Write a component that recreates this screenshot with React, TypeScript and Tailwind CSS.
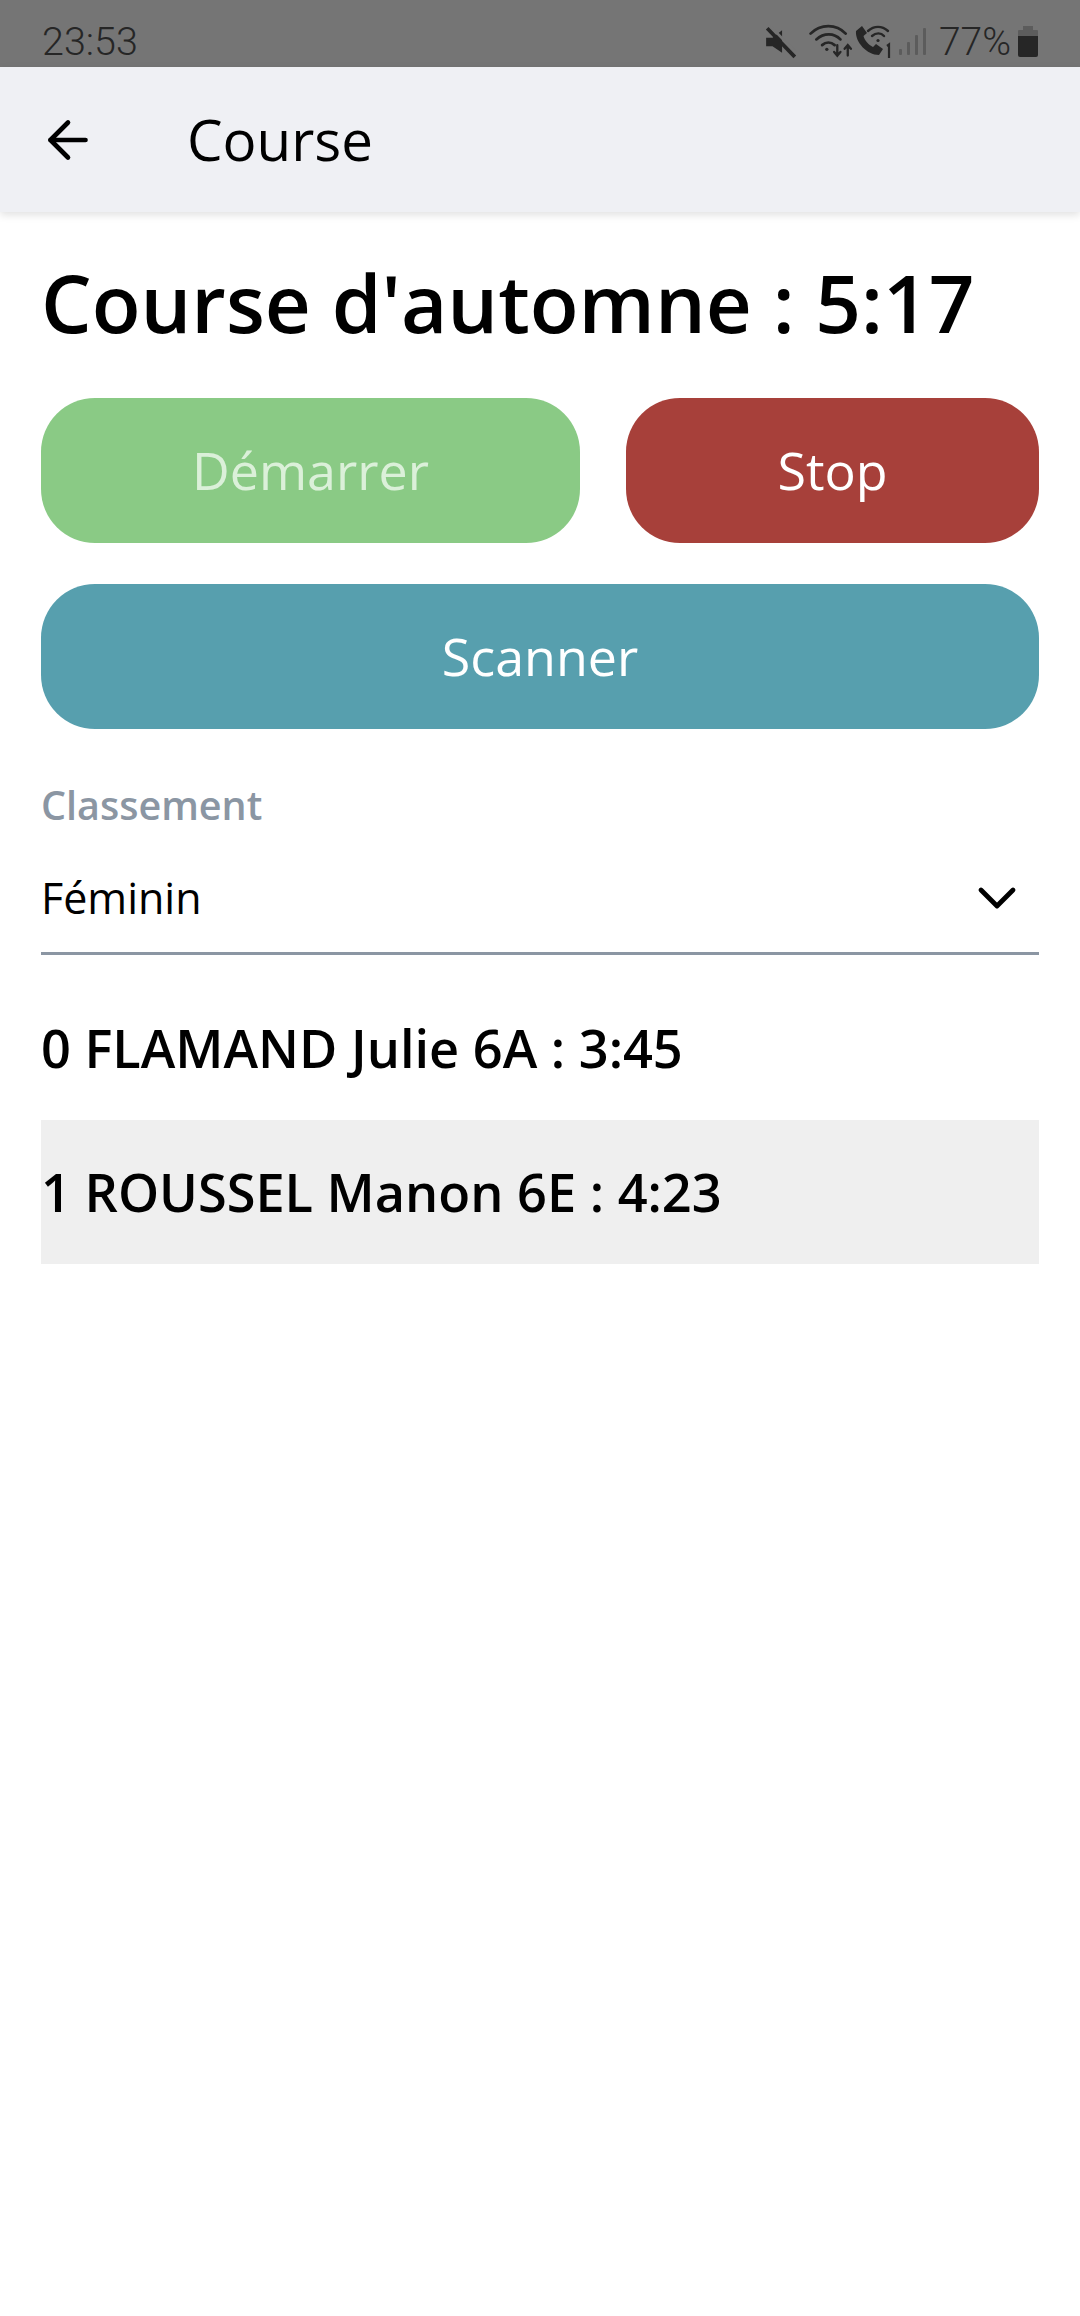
import { ArrowLeft, ChevronDown } from "lucide-react";

function StatusIcons() {
  return (
    <div className="flex items-center text-[#262626] mt-[16px]">
      <svg width="32" height="34" viewBox="0 0 30 32" className="mr-[12px]">
        <path d="M1 12h6l9-7v21l-9-6H1z" fill="#262626" />
        <path d="M2 3l26 27" stroke="#262626" strokeWidth="3.5" />
        <path d="M5 1l26 27" stroke="#757575" strokeWidth="2.5" />
      </svg>
      <svg width="44" height="36" viewBox="0 0 42 34" fill="none" stroke="#262626" strokeWidth="2.6" strokeLinecap="round">
        <path d="M1.5 9C11 -0.5 26 -0.5 35 9" />
        <path d="M7 14.5c7-6.5 17-6.5 23 0" />
        <path d="M12.5 20c3.6-3.2 8.4-3.2 12 0" />
        <circle cx="17" cy="24" r="1.6" fill="#262626" stroke="none" />
        <path d="M27 20v10m-3-3.5l3 3.5 3-3.5M37 30V20m-3 3.5l3-3.5 3 3.5" strokeWidth="2.2" />
      </svg>
      <svg width="38" height="34" viewBox="0 0 38 34" fill="none" className="ml-[1px]">
        <path d="M2 6l6-5 5 7-3.5 3c1 4 5 9 9.5 11l3-3 7 5-4 6C13 30 1 17 2 6z" fill="#262626" />
        <path d="M14 6c6-5.5 14-5.5 20 0M18 11c4-3.5 9-3.5 12 0" stroke="#262626" strokeWidth="2.4" strokeLinecap="round" />
        <circle cx="24" cy="15.5" r="1.6" fill="#262626" />
        <path d="M33 21l2-1.5V33" stroke="#262626" strokeWidth="2.2" />
      </svg>
      <svg width="30" height="32" viewBox="0 0 30 32" className="ml-[5px]" fill="#5c5c5c">
        <rect x="2" y="23" width="3" height="6" rx="1" />
        <rect x="10" y="16" width="3" height="13" rx="1" />
        <rect x="18" y="9" width="3" height="20" rx="1" />
        <rect x="26" y="2" width="3" height="27" rx="1" />
      </svg>
      <span className="ml-[12px] text-[39px] leading-[40px] [font-family:Roboto,sans-serif] font-light">77%</span>
      <svg width="22" height="32" viewBox="0 0 22 32" className="ml-[6px]">
        <rect x="6" y="0" width="10" height="5" fill="#5c5c5c" />
        <path d="M2 4h18a1 1 0 011 1v5H1V5a1 1 0 011-1z" fill="#5c5c5c" />
        <path d="M1 10h20v19a2 2 0 01-2 2H3a2 2 0 01-2-2z" fill="#262626" />
      </svg>
    </div>
  );
}

export default function App() {
  return (
    <div className="w-[1080px] h-[2316px] bg-white flex flex-col overflow-hidden [font-family:'Open_Sans',sans-serif] text-black">
      <div className="h-[67px] bg-[#757575] flex items-center justify-between pl-[42px] pr-[41px]">
        <span className="text-[39.5px] leading-[40px] mt-[16px] text-[#262626] [font-family:Roboto,sans-serif] font-light">23:53</span>
        <StatusIcons />
      </div>
      <div className="h-[145px] bg-[#eff0f4] flex items-center pl-[38px] shadow-[0_3px_8px_rgba(0,0,0,0.12)] shrink-0">
        <ArrowLeft size={60} strokeWidth={1.85} />
        <span className="ml-[89px] text-[56.5px] leading-[70px]">Course</span>
      </div>
      <div className="flex flex-col px-[41px]">
        <h1 className="mt-[33px] h-[117px] text-[80px] leading-[114px] font-semibold whitespace-nowrap">Course d'automne : 5:17</h1>
        <div className="mt-[36px] flex gap-[46px]">
          <button className="w-[539px] h-[145px] rounded-[54px] bg-[#8aca85] text-[#dbf0d9] text-[52px] pb-[2px]">Démarrer</button>
          <button className="flex-1 h-[145px] rounded-[54px] bg-[#a7403a] text-white text-[52px] pb-[2px]">Stop</button>
        </div>
        <button className="mt-[41px] h-[145px] rounded-[54px] bg-[#579fae] text-white text-[52px] pb-[2px]">Scanner</button>
        <div className="mt-[50px] text-[#8b96a3] text-[39.5px] leading-[52px] font-semibold">Classement</div>
        <div className="mt-[12px] h-[112px] flex items-center justify-between border-b-[3px] border-[#8b96a3]">
          <span className="text-[43px] leading-[60px]">Féminin</span>
          <ChevronDown size={64} strokeWidth={1.8} className="mr-[10px]" />
        </div>
        <div className="h-[165px] pt-[21px] flex items-center text-[52.3px] font-semibold">0 FLAMAND Julie 6A : 3:45</div>
        <div className="h-[144px] bg-[#efefef] flex items-center text-[52.3px] font-semibold">1 ROUSSEL Manon 6E : 4:23</div>
      </div>
    </div>
  );
}
